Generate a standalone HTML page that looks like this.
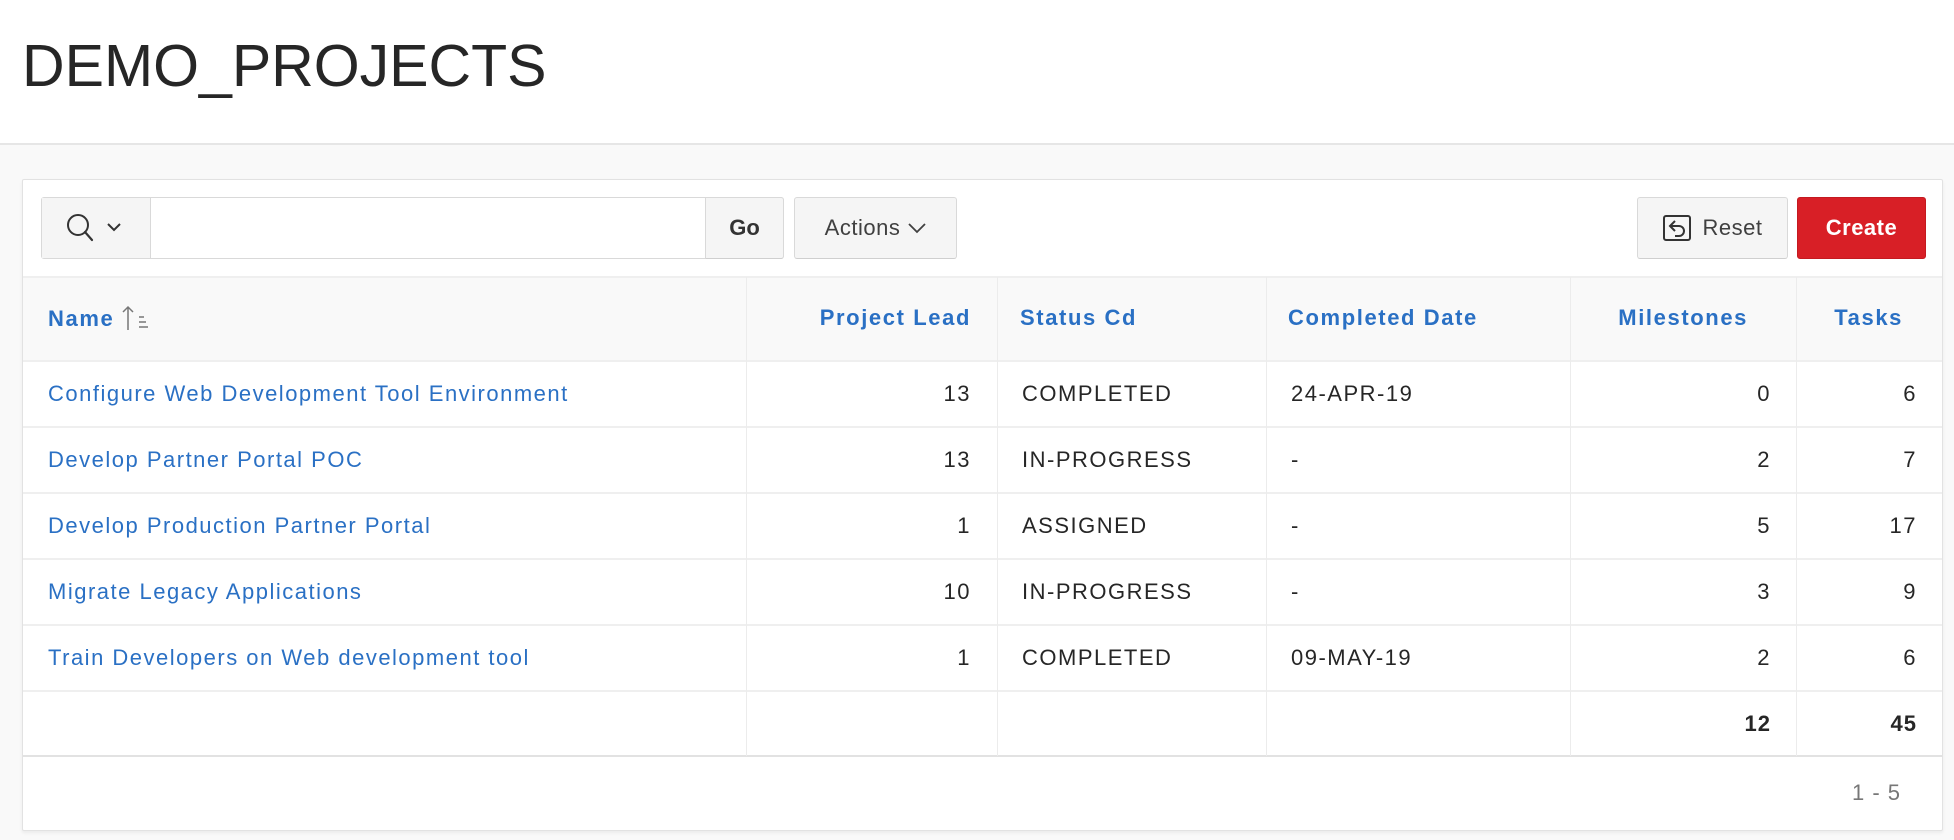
<!DOCTYPE html>
<html><head><meta charset="utf-8"><style>
*{box-sizing:border-box;margin:0;padding:0}
body{width:1954px;height:840px;background:#f9f9f9;font-family:"Liberation Sans",Arial,sans-serif;color:#262626;position:relative;overflow:hidden}
.hdr{position:absolute;left:0;top:0;width:1954px;height:145px;background:#fff;border-bottom:2px solid #e6e6e6}
.hdr h1{position:absolute;left:22px;top:32px;font-size:59px;font-weight:400;color:#262626;letter-spacing:0}
.card{position:absolute;left:22px;top:179px;width:1921px;height:652px;background:#fff;border:1px solid #e2e2e2;border-radius:2px;box-shadow:0 2px 3px rgba(0,0,0,.06)}
.btn{position:absolute;top:197px;height:62px;background:#f5f5f5;border:1px solid #d9d9d9;border-bottom-color:#cfcfcf;border-radius:3px;font-size:22px;display:flex;align-items:center;justify-content:center;color:#404040}
.a{position:absolute;font-size:22px;letter-spacing:1.5px;white-space:nowrap}
.h{font-weight:700;color:#2a70c4;letter-spacing:1.6px}
.l{color:#2a70c4}
.r{text-align:right}
.vl{position:absolute;width:1px;background:#ececec}
.hl{position:absolute;left:23px;width:1919px;height:2px;background:#efefef}
</style></head><body>
<div class="hdr"><h1>DEMO_PROJECTS</h1></div>
<div class="card"></div>
<div style="position:absolute;left:41px;top:197px;width:743px;height:62px;border:1px solid #d9d9d9;border-radius:3px;background:#fff"></div>
<div style="position:absolute;left:42px;top:198px;width:109px;height:60px;background:#f5f5f5;border-right:1px solid #d9d9d9"></div>
<svg style="position:absolute;left:62px;top:210px" width="70" height="40" viewBox="0 0 70 40">
<circle cx="16" cy="15" r="10" fill="none" stroke="#333" stroke-width="2"/>
<line x1="23" y1="22" x2="30" y2="30" stroke="#333" stroke-width="2.2" stroke-linecap="round"/>
<polyline points="46,14 52,20 58,14" fill="none" stroke="#333" stroke-width="2"/>
</svg>
<div class="btn" style="left:705px;width:79px;font-weight:700;color:#333;border-radius:0 3px 3px 0">Go</div>
<div class="btn" style="left:794px;width:163px;letter-spacing:0.5px">Actions<svg style="margin-left:8px" width="18" height="12" viewBox="0 0 18 12"><polyline points="1,2 9,10 17,2" fill="none" stroke="#404040" stroke-width="1.8"/></svg></div>
<div class="btn" style="left:1637px;width:151px;letter-spacing:0.5px"><svg style="margin-right:12px" width="28" height="26" viewBox="0 0 28 26"><rect x="1" y="1" width="26" height="24" rx="2" fill="none" stroke="#333" stroke-width="2"/><path d="M12 6 L7 11 L12 16 M7 11 H16 a5 5 0 0 1 0 10 H12" fill="none" stroke="#333" stroke-width="2"/></svg>Reset</div>
<div class="btn" style="left:1797px;width:129px;background:#d81f26;border-color:#c41a20;color:#fff;font-weight:700;letter-spacing:0.5px">Create</div>
<div style="position:absolute;left:23px;top:277px;width:1919px;height:84px;background:#f9f9f9"></div>
<div class="hl" style="top:276px"></div>
<div class="hl" style="top:360px"></div>
<div class="hl" style="top:426px"></div>
<div class="hl" style="top:492px"></div>
<div class="hl" style="top:558px"></div>
<div class="hl" style="top:624px"></div>
<div class="hl" style="top:690px"></div>
<div class="hl" style="top:755px;background:#e2e2e2"></div>
<div class="vl" style="left:746px;top:277px;height:479px"></div>
<div class="vl" style="left:997px;top:277px;height:479px"></div>
<div class="vl" style="left:1266px;top:277px;height:479px"></div>
<div class="vl" style="left:1570px;top:277px;height:479px"></div>
<div class="vl" style="left:1796px;top:277px;height:479px"></div>
<div class="a h" style="left:48px;top:305px">Name <svg width="34" height="26" viewBox="0 0 34 26" style="vertical-align:-5px"><path d="M6 25V2 M1 7 L6 2 L11 7" fill="none" stroke="#777" stroke-width="1.5"/><path d="M17 12h5 M17 17h7 M17 22h9" stroke="#777" stroke-width="1.5"/></svg></div>
<div class="a h r" style="right:983px;top:305px">Project Lead</div>
<div class="a h" style="left:1020px;top:305px">Status Cd</div>
<div class="a h" style="left:1288px;top:305px">Completed Date</div>
<div class="a h r" style="right:206px;top:305px">Milestones</div>
<div class="a h r" style="right:51px;top:305px">Tasks</div>

<div class="a l" style="left:48px;top:381px">Configure Web Development Tool Environment</div>
<div class="a r" style="right:983px;top:381px">13</div>
<div class="a" style="left:1022px;top:381px">COMPLETED</div>
<div class="a" style="left:1291px;top:381px">24-APR-19</div>
<div class="a r" style="right:183px;top:381px">0</div>
<div class="a r" style="right:37px;top:381px">6</div>

<div class="a l" style="left:48px;top:447px">Develop Partner Portal POC</div>
<div class="a r" style="right:983px;top:447px">13</div>
<div class="a" style="left:1022px;top:447px">IN-PROGRESS</div>
<div class="a" style="left:1291px;top:447px">-</div>
<div class="a r" style="right:183px;top:447px">2</div>
<div class="a r" style="right:37px;top:447px">7</div>

<div class="a l" style="left:48px;top:513px">Develop Production Partner Portal</div>
<div class="a r" style="right:983px;top:513px">1</div>
<div class="a" style="left:1022px;top:513px">ASSIGNED</div>
<div class="a" style="left:1291px;top:513px">-</div>
<div class="a r" style="right:183px;top:513px">5</div>
<div class="a r" style="right:37px;top:513px">17</div>

<div class="a l" style="left:48px;top:579px">Migrate Legacy Applications</div>
<div class="a r" style="right:983px;top:579px">10</div>
<div class="a" style="left:1022px;top:579px">IN-PROGRESS</div>
<div class="a" style="left:1291px;top:579px">-</div>
<div class="a r" style="right:183px;top:579px">3</div>
<div class="a r" style="right:37px;top:579px">9</div>

<div class="a l" style="left:48px;top:645px">Train Developers on Web development tool</div>
<div class="a r" style="right:983px;top:645px">1</div>
<div class="a" style="left:1022px;top:645px">COMPLETED</div>
<div class="a" style="left:1291px;top:645px">09-MAY-19</div>
<div class="a r" style="right:183px;top:645px">2</div>
<div class="a r" style="right:37px;top:645px">6</div>

<div class="a r" style="right:183px;top:711px;font-weight:700;letter-spacing:1px">12</div>
<div class="a r" style="right:37px;top:711px;font-weight:700;letter-spacing:1px">45</div>

<div class="a r" style="right:53px;top:780px;color:#777;letter-spacing:1px">1 - 5</div>
</body></html>
